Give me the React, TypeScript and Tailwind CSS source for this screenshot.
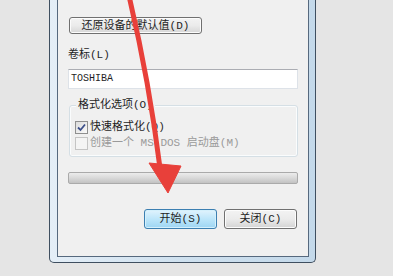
import React from "react";

const font = { fontFamily: '"Liberation Mono", "Noto Sans CJK SC", monospace' };

export default function App() {
  return (
    <div
      className="relative w-[393px] h-[276px] overflow-hidden bg-[#e5e5e5] text-[11px] leading-[14px] text-[#1e1e1e]"
      style={font}
    >
      {/* Window frame */}
      <div className="ml-[49px] w-[267px] h-[263px] border-x border-b border-[#3f4f60] rounded-b-[5px] bg-gradient-to-r from-[#e4eef7] via-[#cfe1ef] to-[#c4d9ea] pl-[7px] pr-[6px] pb-[5px]">
        <div className="h-full bg-[#f0f0f0] border-x border-b border-[#56697e] px-[10px] flex flex-col">
          {/* restore defaults button */}
          <div className="mt-[17px] ml-[1px] w-[133px] h-[17px] flex items-center justify-center rounded-[3px] border border-[#707070] bg-gradient-to-b from-[#f3f3f3] via-[#ebebeb] to-[#d6d6d6] shadow-[inset_0_0_0_1px_#fcfcfc]">
            还原设备的默认值(D)
          </div>

          {/* Volume label */}
          <div className="mt-[14px]">卷标(L)</div>
          <div className="mt-[7px] h-[20px] w-[230px] bg-white border border-[#dde2e8] border-t-[#abadb3] flex items-center pl-[2px]">
            <span className="text-[10px]">TOSHIBA</span>
          </div>

          {/* Format options group */}
          <div className="relative mt-[16px] w-[229px] ml-[1px] h-[52px] rounded-[3px] border border-[#d5dfe5] shadow-[inset_0_0_0_1px_#fafcfd] pt-[13px] pl-[5px] flex flex-col">
            <span className="absolute -top-[8px] left-[6px] px-[2px] bg-[#f0f0f0]">格式化选项(O)</span>
            <div className="h-[16px] flex items-center gap-[2px]">
              <div className="w-[13px] h-[13px] border border-[#8f8f8f] bg-gradient-to-br from-[#dcdcdc] to-[#fafafa] flex items-center justify-center">
                <svg width="11" height="11" viewBox="0 0 11 11">
                  <path d="M2 5.5 L4.5 8 L9 2.5" fill="none" stroke="#3c4f8a" strokeWidth="1.8" />
                </svg>
              </div>
              <span>快速格式化(Q)</span>
            </div>
            <div className="h-[16px] flex items-center gap-[2px] text-[#9a9a9a]">
              <div className="w-[13px] h-[13px] border border-[#c4c4c4] bg-[#f4f4f4]" />
              <span>创建一个 MS-DOS 启动盘(M)</span>
            </div>
          </div>

          {/* Progress bar */}
          <div className="mt-[15px] w-[230px] h-[12px] rounded-[2px] border border-[#aaaaaa] bg-gradient-to-b from-[#ececec] via-[#d9d9d9] to-[#c2c2c2]" />

          {/* Buttons */}
          <div className="mt-[25px] w-[229px] flex justify-end gap-[7px]">
            <div className="w-[73px] h-[20px] flex items-center justify-center rounded-[3px] border border-[#3c7fb1] bg-gradient-to-b from-[#e1f3fd] via-[#bde6fa] to-[#9dd5f3] shadow-[inset_0_0_0_1px_#d4f0fc]">
              开始(S)
            </div>
            <div className="w-[73px] h-[20px] flex items-center justify-center rounded-[3px] border border-[#707070] bg-gradient-to-b from-[#f3f3f3] via-[#ebebeb] to-[#d4d4d4] shadow-[inset_0_0_0_1px_#fcfcfc]">
              关闭(C)
            </div>
          </div>
        </div>
      </div>

      {/* Red annotation arrow */}
      <svg className="absolute left-0 top-0" width="393" height="276" viewBox="0 0 393 276">
        <path d="M129 -4 Q149 80 160 168" fill="none" stroke="#e8403a" strokeWidth="5" strokeLinecap="round" />
        <path d="M149 163 L181 166 L168 193 Z" fill="#e8403a" stroke="#e8403a" strokeWidth="1" strokeLinejoin="round" />
      </svg>
    </div>
  );
}
